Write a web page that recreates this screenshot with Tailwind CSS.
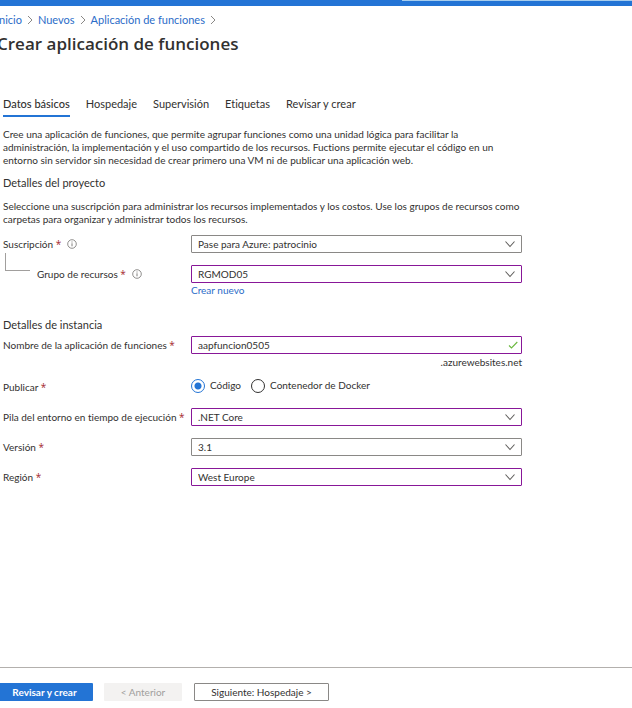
<!DOCTYPE html>
<html lang="es">
<head>
<meta charset="utf-8">
<meta name="viewport" content="width=device-width, initial-scale=1">
<title>Crear aplicación de funciones</title>
<script src="https://cdn.jsdelivr.net/npm/@tailwindcss/browser@4"></script>
</head>
<body class="flex min-h-screen flex-col overflow-x-hidden bg-white font-['Lato','Open_Sans',sans-serif] text-[10px] leading-[13px] text-[#323130] [font-variant-ligatures:none]">
<svg class="hidden">
  <symbol id="chev" viewBox="0 0 12 12"><path d="M1.5 3.500 6 8.500l4.500-5" fill="none" stroke="#605e5c" stroke-width="1.100"/></symbol>
  <symbol id="sep" viewBox="0 0 6 10"><path d="M1 1l4 4-4 4" fill="none" stroke="#8a8886" stroke-width="1"/></symbol>
  <symbol id="info" viewBox="0 0 10 10"><circle cx="5" cy="5" r="4.300" fill="none" stroke="#605e5c" stroke-width=".7"/><path d="M5 4.300v3M5 2.500v1" stroke="#605e5c" stroke-width=".8"/></symbol>
</svg>

<header class="flex h-1.5 items-start justify-end bg-[#2374d5]">
  <div class="h-px w-[230px] bg-[#a6cdee]"></div>
</header>

<nav aria-label="Ruta" class="-ml-1 mt-1.5 flex items-center gap-[5px] text-[11px] leading-4 text-[#2b6cc8]">
  <a href="#">Inicio</a>
  <svg class="h-2.5 w-1.5"><use href="#sep"/></svg>
  <a href="#">Nuevos</a>
  <svg class="h-2.5 w-1.5"><use href="#sep"/></svg>
  <a href="#">Aplicación de funciones</a>
  <svg class="h-2.5 w-1.5"><use href="#sep"/></svg>
</nav>
<h1 class="-ml-[3px] mt-1 font-['Open_Sans'] text-[17px] font-semibold leading-6">Crear aplicación de funciones</h1>

<main class="max-w-[522px] pl-[3px]">
  <nav aria-label="Secciones" class="mt-10 flex gap-4 text-[11px] leading-4">
    <a href="#" aria-current="page" class="border-b-2 border-[#2374d5] pb-[3px] font-medium">Datos básicos</a>
    <a href="#">Hospedaje</a>
    <a href="#">Supervisión</a>
    <a href="#">Etiquetas</a>
    <a href="#">Revisar y crear</a>
  </nav>

  <p class="mt-[11px] max-w-[500px]">Cree una aplicación de funciones, que permite agrupar funciones como una unidad lógica para facilitar la administración, la implementación y el uso compartido de los recursos. Fuctions permite ejecutar el código en un entorno sin servidor sin necesidad de crear primero una VM ni de publicar una aplicación web.</p>

  <form>
    <h2 class="mt-2 text-[11px] leading-4">Detalles del proyecto</h2>
    <p class="mt-[9px]">Seleccione una suscripción para administrar los recursos implementados y los costos. Use los grupos de recursos como carpetas para organizar y administrar todos los recursos.</p>

    <div class="mt-[9px] flex items-center">
      <div class="flex w-[188px] shrink-0 items-center gap-1.5">
        <label for="sub">Suscripción <span class="font-['Open_Sans'] text-[#a4262c]">*</span></label>
        <svg class="size-2.5" role="img" aria-label="Información"><use href="#info"/></svg>
      </div>
      <div class="relative grow">
        <select id="sub" class="block h-[18px] w-full appearance-none rounded-[1px] border border-[#8a8886] bg-white px-1.5"><option>Pase para Azure: patrocinio</option></select>
        <svg class="pointer-events-none absolute right-1.5 top-[3px] size-3"><use href="#chev"/></svg>
      </div>
    </div>

    <div class="mt-3 flex items-start">
      <div class="flex w-[188px] shrink-0 items-center">
        <div class="-mt-6 ml-0.5 mr-[7px] h-[18px] w-[25px] border-b border-l border-[#a19f9d]"></div>
        <label for="rg" class="leading-[18px]">Grupo de recursos <span class="font-['Open_Sans'] text-[#a4262c]">*</span></label>
        <svg class="ml-1.5 size-2.5" role="img" aria-label="Información"><use href="#info"/></svg>
      </div>
      <div class="grow">
        <div class="relative">
          <select id="rg" class="block h-[18px] w-full appearance-none rounded-[1px] border border-[#881798] bg-white px-1.5"><option>RGMOD05</option></select>
          <svg class="pointer-events-none absolute right-1.5 top-[3px] size-3"><use href="#chev"/></svg>
        </div>
        <a href="#" class="mt-px block text-[#2b6cc8]">Crear nuevo</a>
      </div>
    </div>

    <h2 class="mt-5 text-[11px] leading-4">Detalles de instancia</h2>
    <div class="mt-[3px] flex items-start">
      <label for="name" class="w-[188px] shrink-0 leading-[18px]">Nombre de la aplicación de funciones <span class="font-['Open_Sans'] text-[#a4262c]">*</span></label>
      <div class="grow">
        <div class="relative">
          <input id="name" type="text" value="aapfuncion0505" class="block h-[18px] w-full rounded-[1px] border border-[#881798] bg-white px-1.5">
          <svg class="pointer-events-none absolute right-1 top-1 size-2.5" viewBox="0 0 10 10"><path d="M1 5.500 3.500 8 9.300 2" fill="none" stroke="#6bb83f" stroke-width="1.100"/></svg>
        </div>
        <p class="mt-0.5 text-right">.azurewebsites.net</p>
      </div>
    </div>

    <fieldset class="mt-2 flex items-center">
      <legend class="float-left w-[188px] shrink-0 pt-1">Publicar <span class="font-['Open_Sans'] text-[#a4262c]">*</span></legend>
      <div class="flex items-center gap-2.5">
        <label class="flex items-center gap-[5px]"><input type="radio" name="pub" checked class="size-3.5 appearance-none rounded-full border border-[#323130] checked:border-[#2374d5] checked:bg-[radial-gradient(circle,#2374d5_3px,white_4px)]">Código</label>
        <label class="flex items-center gap-[5px]"><input type="radio" name="pub" class="size-3.5 appearance-none rounded-full border border-[#323130]">Contenedor de Docker</label>
      </div>
    </fieldset>

    <div class="mt-3.5 flex flex-col gap-3">
      <div class="flex items-center">
        <label for="stack" class="w-[188px] shrink-0 whitespace-nowrap">Pila del entorno en tiempo de ejecución <span class="font-['Open_Sans'] text-[#a4262c]">*</span></label>
        <div class="relative grow">
          <select id="stack" class="block h-[18px] w-full appearance-none rounded-[1px] border border-[#881798] bg-white px-1.5"><option>.NET Core</option></select>
          <svg class="pointer-events-none absolute right-1.5 top-[3px] size-3"><use href="#chev"/></svg>
        </div>
      </div>
      <div class="flex items-center">
        <label for="ver" class="w-[188px] shrink-0">Versión <span class="font-['Open_Sans'] text-[#a4262c]">*</span></label>
        <div class="relative grow">
          <select id="ver" class="block h-[18px] w-full appearance-none rounded-[1px] border border-[#8a8886] bg-white px-1.5"><option>3.1</option></select>
          <svg class="pointer-events-none absolute right-1.5 top-[3px] size-3"><use href="#chev"/></svg>
        </div>
      </div>
      <div class="flex items-center">
        <label for="reg" class="w-[188px] shrink-0">Región <span class="font-['Open_Sans'] text-[#a4262c]">*</span></label>
        <div class="relative grow">
          <select id="reg" class="block h-[18px] w-full appearance-none rounded-[1px] border border-[#881798] bg-white px-1.5"><option>West Europe</option></select>
          <svg class="pointer-events-none absolute right-1.5 top-[3px] size-3"><use href="#chev"/></svg>
        </div>
      </div>
    </div>
  </form>
</main>

<footer class="mt-auto flex border-t border-[#b3b0ad] pb-[7px] pt-[15px]">
  <button type="button" class="h-[18px] w-[93px] rounded-r-[1px] bg-[#2374d5] pr-1 font-bold text-white">Revisar y crear</button>
  <button type="button" disabled class="ml-[11px] h-[18px] w-[78px] rounded-[1px] bg-[#f3f2f1] text-[#a19f9d]">&lt; Anterior</button>
  <button type="button" class="ml-3 h-[18px] w-[135px] rounded-[1px] border border-[#8a8886] bg-white">Siguiente: Hospedaje &gt;</button>
</footer>
</body>
</html>
